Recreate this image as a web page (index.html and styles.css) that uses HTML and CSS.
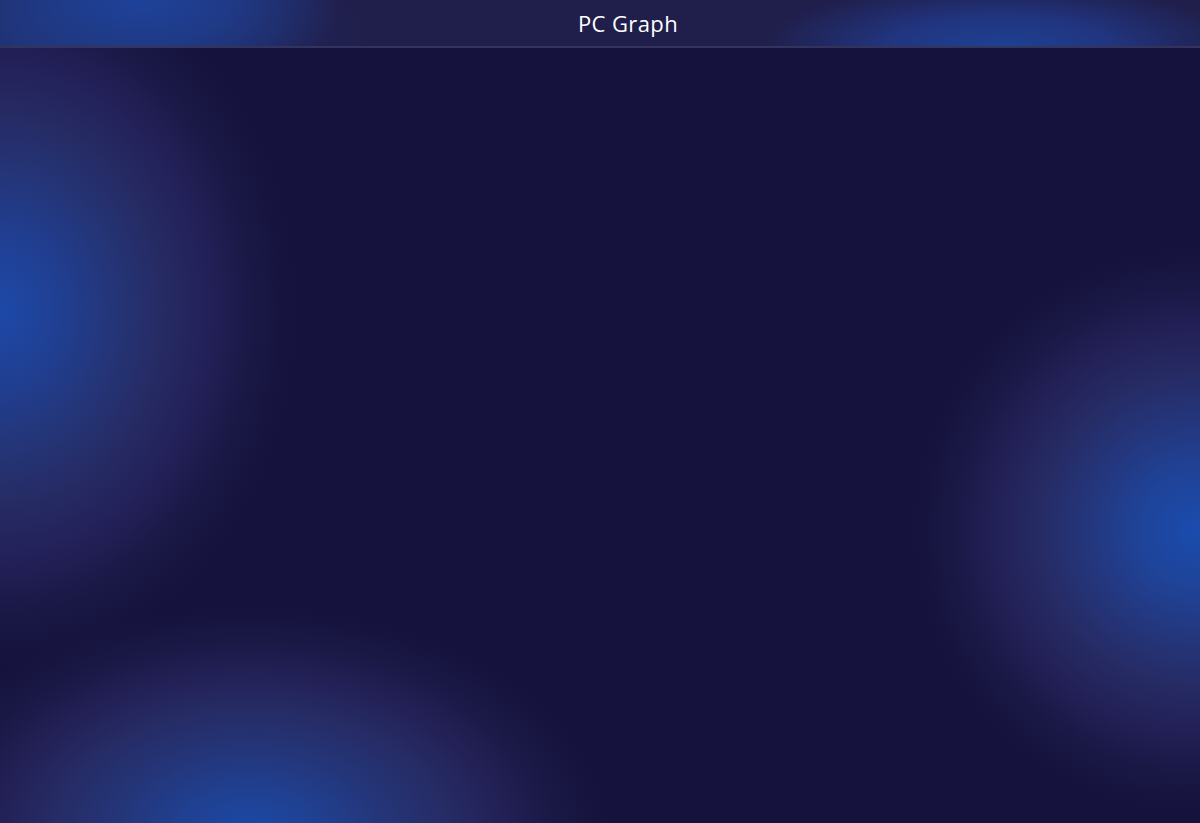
FILE: index.html
```html
<!DOCTYPE html>
<html lang="en">
<head>
<meta charset="utf-8">
<title>PC Graph</title>
<link rel="stylesheet" href="styles.css">
</head>
<body>
  <div class="app">
    <header class="topbar">
      <h1 class="title">PC Graph</h1>
    </header>
    <main class="stage"></main>
  </div>
</body>
</html>
```
FILE: styles.css
```css
html, body {
  margin: 0;
  padding: 0;
  height: 100%;
}

body {
  background-color: #15133d;
  font-family: "Open Sans", "Noto Sans", "Liberation Sans", sans-serif;
  color: #ffffff;
  overflow: hidden;
}

.app {
  height: 100vh;
  display: flex;
  flex-direction: column;
  background:
    radial-gradient(ellipse 300px 360px at 0px 310px, #1d49a8 0%, #203f92 20%, #243578 38%, #262b64 54%, #232058 70%, rgba(28,26,72,0.6) 85%, rgba(21,19,61,0) 100%),
    radial-gradient(ellipse 285px 285px at 1195px 530px, #1a4cae 0%, #1f4398 20%, #24367c 38%, #262b64 55%, #221f55 72%, rgba(28,26,72,0.6) 86%, rgba(21,19,61,0) 100%),
    radial-gradient(ellipse 360px 230px at 250px 835px, #1b4aa8 0%, #204091 20%, #243578 38%, #262b64 56%, #221f54 72%, rgba(28,26,72,0.6) 86%, rgba(21,19,61,0) 100%),
    #15133d;
}

.topbar {
  height: 46px;
  flex: 0 0 46px;
  display: flex;
  align-items: center;
  justify-content: center;
  border-bottom: 2px solid #34335c;
  background:
    radial-gradient(ellipse 200px 100px at 140px 0px, #1e429a 0%, #1f3a86 45%, rgba(32,30,74,0) 100%),
    radial-gradient(ellipse 240px 66px at 1000px 47px, #1d4192 0%, #213580 45%, rgba(32,30,74,0) 100%),
    radial-gradient(ellipse 320px 130px at 60px 40px, rgba(34,52,120,0.9) 0%, rgba(32,30,74,0) 100%),
    #201e4a;
}

.title {
  margin: 0;
  padding-left: 56px;
  font-size: 22px;
  font-weight: 500;
  letter-spacing: 0.4px;
  color: #ffffff;
}

.stage {
  flex: 1 1 auto;
}
```
